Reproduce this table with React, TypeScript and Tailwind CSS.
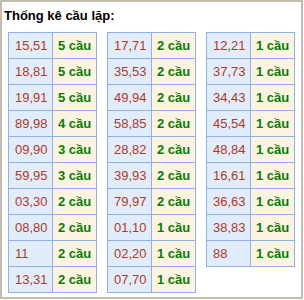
const tables: [string, number][][] = [
  [
    ['15,51', 5], ['18,81', 5], ['19,91', 5], ['89,98', 4], ['09,90', 3],
    ['59,95', 3], ['03,30', 2], ['08,80', 2], ['11', 2], ['13,31', 2],
  ],
  [
    ['17,71', 2], ['35,53', 2], ['49,94', 2], ['58,85', 2], ['28,82', 2],
    ['39,93', 2], ['79,97', 2], ['01,10', 1], ['02,20', 1], ['07,70', 1],
  ],
  [
    ['12,21', 1], ['37,73', 1], ['34,43', 1], ['45,54', 1], ['48,84', 1],
    ['16,61', 1], ['36,63', 1], ['38,83', 1], ['88', 1],
  ],
]

export default function App() {
  return (
    <div className="w-[303px] h-[299px] border-2 border-[#c3bcb1] bg-white font-['Liberation_Sans',Arial,sans-serif] text-[13px]">
      <h2 className="pl-[2px] pt-[5px] h-[30px] text-[13px] font-bold text-black leading-[18px]">Thống kê cầu lặp:</h2>
      <div className="flex items-start gap-[10px] pl-[6px]">
        {tables.map((rows, i) => (
          <div key={i} className="w-[89px] border-l border-t border-[#8eb0ec]">
            {rows.map(([pair, count]) => (
              <div key={pair} className="flex h-[26px]">
                <div className="w-[44px] flex items-center pl-[6px] bg-[#e1edfd] border-r border-b border-[#8eb0ec] text-[#b3391b]">
                  {pair}
                </div>
                <div className="w-[44px] flex items-center pl-[5px] bg-[#fdf3e1] border-r border-b border-[#8eb0ec] text-[#067d06] font-bold whitespace-nowrap">
                  {count} cầu
                </div>
              </div>
            ))}
          </div>
        ))}
      </div>
    </div>
  )
}
